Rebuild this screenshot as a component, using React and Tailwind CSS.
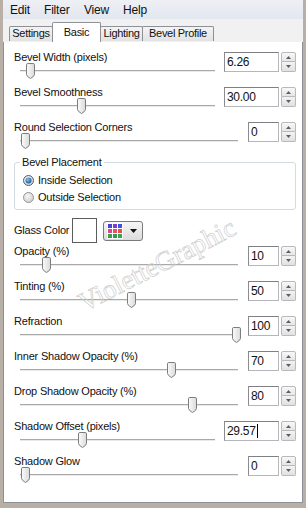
import React from "react";

const rows1 = [
  { label: "Bevel Width (pixels)", value: "6.26", wide: true, pos: 6 },
  { label: "Bevel Smoothness", value: "30.00", wide: true, pos: 57 },
  { label: "Round Selection Corners", value: "0", wide: false, pos: 1 },
];

const rows2 = [
  { label: "Opacity (%)", value: "10", wide: false, pos: 22 },
  { label: "Tinting (%)", value: "50", wide: false, pos: 107 },
  { label: "Refraction", value: "100", wide: false, pos: 212 },
  { label: "Inner Shadow Opacity (%)", value: "70", wide: false, pos: 147 },
  { label: "Drop Shadow Opacity (%)", value: "80", wide: false, pos: 168 },
  { label: "Shadow Offset (pixels)", value: "29.57", wide: true, pos: 58, caret: true },
  { label: "Shadow Glow", value: "0", wide: false, pos: 1 },
];

const swatches = [
  "#4b43d9", "#7a3fd0", "#3e52e6",
  "#d9478d", "#e64f72", "#e94d4d",
  "#3ba04a", "#2d9a5a", "#35a84a",
];

const Thumb = () => (
  <svg width="9" height="16" viewBox="0 0 9 16">
    <defs>
      <linearGradient id="thumbFill" x1="0" y1="0" x2="1" y2="0">
        <stop offset="0" stopColor="#fbfbfb" />
        <stop offset="1" stopColor="#dadada" />
      </linearGradient>
    </defs>
    <path
      d="M1.8 0.5 H7.2 Q8.5 0.5 8.5 1.8 V11.5 Q8.5 13.2 4.5 15.5 Q0.5 13.2 0.5 11.5 V1.8 Q0.5 0.5 1.8 0.5 Z"
      fill="url(#thumbFill)"
      stroke="#7d7d7d"
    />
  </svg>
);

const Slider = ({ wide, pos }) => (
  <div className={`relative ml-[6px] h-[16px] ${wide ? "w-[195px]" : "w-[218px]"}`}>
    <div className="pt-[7px]">
      <div className="h-[2px] border-t border-[#a9a9a9] bg-[#e9e9e9]" />
    </div>
    <div className="absolute top-0" style={{ left: pos }}>
      <Thumb />
    </div>
  </div>
);

const Spinner = () => (
  <div className="ml-[2px] mt-[2px] flex h-[20px] w-[15px] flex-col">
    <div className="flex h-[10px] items-center justify-center rounded-t-[2px] border border-[#b9b9b9] bg-linear-to-b from-[#f8f8f8] to-[#e6e6e6]">
      <svg width="5" height="3" viewBox="0 0 5 3">
        <path d="M2.5 0 L5 3 H0 Z" fill="#5e5e5e" />
      </svg>
    </div>
    <div className="flex h-[10px] items-center justify-center rounded-b-[2px] border border-t-0 border-[#b9b9b9] bg-linear-to-b from-[#f3f3f3] to-[#e1e1e1]">
      <svg width="5" height="3" viewBox="0 0 5 3">
        <path d="M0 0 H5 L2.5 3 Z" fill="#5e5e5e" />
      </svg>
    </div>
  </div>
);

const Row = ({ label, value, wide, pos, caret }) => (
  <div className="flex h-[35px] pl-[10px] pr-[6px]">
    <div className="min-w-0 flex-1">
      <div className="h-[13px] text-[11px] leading-[14px] tracking-[-0.2px]">{label}</div>
      <Slider wide={wide} pos={pos} />
    </div>
    <div
      className={`mt-[2px] flex h-[20px] items-center border border-[#b4b6bb] border-t-[#7e8086] border-l-[#8a8c92] bg-white pl-[2px] text-[12px] tracking-[-0.3px] ${
        wide ? "w-[55px]" : "w-[31px]"
      }`}
    >
      {value}
      {caret && <span className="ml-[1px] h-[14px] w-px bg-black" />}
    </div>
    <Spinner />
  </div>
);

const Radio = ({ checked, label }) => (
  <div className="flex h-[17px] items-center gap-[4px] pl-[8px]">
    <svg width="11" height="11" viewBox="0 0 11 11">
      <defs>
        <radialGradient id="radioOff" cx="0.4" cy="0.35" r="0.7">
          <stop offset="0" stopColor="#f6f6f6" />
          <stop offset="1" stopColor="#cfcfcf" />
        </radialGradient>
        <radialGradient id="radioDot" cx="0.4" cy="0.35" r="0.7">
          <stop offset="0" stopColor="#8cc3f0" />
          <stop offset="1" stopColor="#15508c" />
        </radialGradient>
      </defs>
      <circle cx="5.5" cy="5.5" r="5" fill="url(#radioOff)" stroke={checked ? "#44617d" : "#959595"} />
      {checked && <circle cx="5.5" cy="5.5" r="3" fill="url(#radioDot)" />}
    </svg>
    <span className="text-[11px] tracking-[-0.2px]">{label}</span>
  </div>
);

const Tab = ({ label, width, active, first }) => (
  <div
    className={`flex justify-center rounded-t-[2px] border border-b-0 border-[#8d9097] text-[11px] leading-[13px] tracking-[-0.3px] ${
      first ? "" : "-ml-px"
    } ${
      active
        ? "relative z-10 h-[20px] bg-white pt-[3px]"
        : "mb-px h-[15px] bg-linear-to-b from-[#f4f4f4] to-[#e2e2e2]"
    }`}
    style={{ width }}
  >
    {label}
  </div>
);

export default function App() {
  return (
    <div className="flex h-[508px] w-[306px] flex-col bg-[#b8b0a6] px-[3px] pb-[5px] font-['Liberation_Sans',Arial,sans-serif] text-[#111]">
      {/* Menu */}
      <div className="flex h-[19px] items-center bg-linear-to-b from-[#eef0f4] to-[#e2e6ee] pl-[7px] text-[12px] tracking-[-0.2px]">
        <span className="w-[34px]">Edit</span>
        <span className="w-[40px]">Filter</span>
        <span className="w-[39px]">View</span>
        <span>Help</span>
      </div>

      {/* Tabs */}
      <div className="relative z-10 -mb-px flex h-[23px] items-end bg-[#f1f1f1] pl-[6px]">
        <Tab label="Settings" width={44} first />
        <Tab label="Basic" width={49} active />
        <Tab label="Lighting" width={43} />
        <Tab label="Bevel Profile" width={72} />
      </div>

      {/* Panel */}
      <div className="relative flex-1 overflow-hidden border border-[#8d9097] bg-white pt-[8px]">
        {rows1.map((r) => (
          <Row key={r.label} {...r} />
        ))}

        <fieldset className="ml-[10px] mr-[6px] rounded-[3px] border border-[#d3dce3] pb-[3px] pt-[3px]">
          <legend className="ml-[5px] px-[2px] text-[11px] leading-[14px] tracking-[-0.2px]">
            Bevel Placement
          </legend>
          <Radio checked label="Inside Selection" />
          <Radio label="Outside Selection" />
        </fieldset>

        <div className="mt-[8px] flex h-[25px] items-center pl-[10px]">
          <span className="w-[58px] text-[11px] tracking-[-0.2px]">Glass Color</span>
          <div className="h-[25px] w-[25px] border border-[#5c5c5c] bg-white" />
          <div className="ml-[6px] flex h-[20px] w-[40px] items-center rounded-[3px] border border-[#7b7b7b] bg-linear-to-b from-[#f6f6f6] to-[#dcdcdc] pl-[3px]">
            <div className="grid grid-cols-3 gap-px bg-white p-px">
              {swatches.map((c, i) => (
                <div key={i} className="h-[4px] w-[4px]" style={{ background: c }} />
              ))}
            </div>
            <svg className="ml-[7px]" width="7" height="4" viewBox="0 0 7 4">
              <path d="M0 0 H7 L3.5 4 Z" fill="#111" />
            </svg>
          </div>
        </div>

        <div className="mt-[1px]">
          {rows2.map((r) => (
            <Row key={r.label} {...r} />
          ))}
        </div>

        {/* watermark */}
        <div className="pointer-events-none absolute left-[153px] top-[223px] -translate-x-1/2 -translate-y-1/2 -rotate-[27deg] whitespace-nowrap font-['Liberation_Serif',serif] text-[27px] text-transparent [-webkit-text-stroke:0.7px_#cfcfcf]">
          VioletteGraphic
        </div>
      </div>
    </div>
  );
}
